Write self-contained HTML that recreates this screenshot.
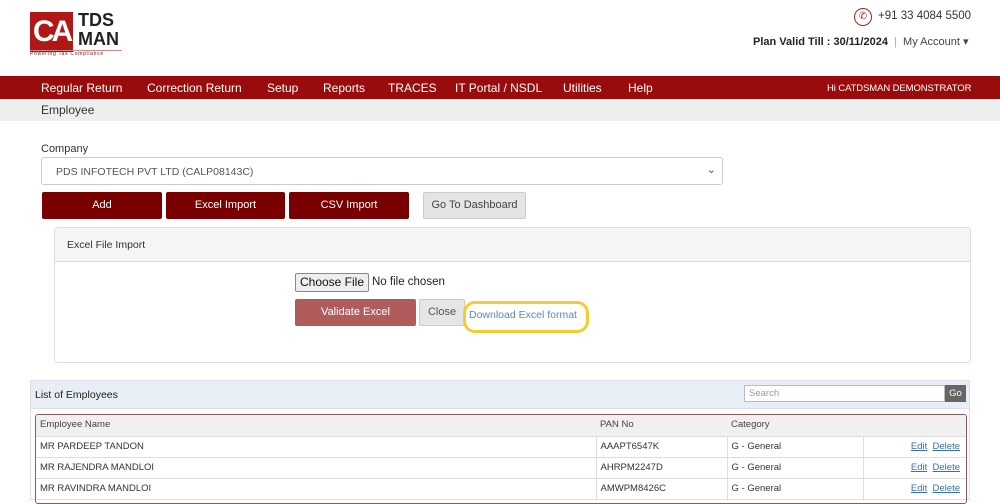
<!DOCTYPE html>
<html><head><meta charset="utf-8"><style>
*{box-sizing:border-box;margin:0;padding:0}
body{width:1000px;height:494px;overflow:hidden;background:#fff;font-family:"Liberation Sans",sans-serif;position:relative;color:#333}
.a{position:absolute}
.nav{left:0;top:76px;width:1000px;height:23px;background:#9a0b0b;color:#fff;font-size:12px}
.nav span{position:absolute;top:5px}
.btn{position:absolute;top:192px;height:27px;background:#780000;color:#fff;font-size:11px;text-align:center;line-height:27px;border-radius:2px}
td{font-size:9.5px;height:21px;line-height:20px;padding:0 0 0 4px;border-top:1px solid #ddd;white-space:nowrap}
a{color:#3a6fa8;text-decoration:underline}
</style></head><body>
<div class="a" style="left:30px;top:12px;width:43px;height:40px;background:#b01818;color:#fff;font-size:30px;font-weight:bold;line-height:40px;text-align:center;letter-spacing:-3px">CA</div>
<div class="a" style="left:78px;top:11px;font-size:18px;font-weight:bold;line-height:19px;color:#222">TDS<br>MAN</div>
<div class="a" style="left:30px;top:50px;width:92px;border-top:1px solid #c88;font-size:5px;color:#900;letter-spacing:.7px;white-space:nowrap">Powering Tax Compliance</div>
<div class="a" style="left:854px;top:8px;width:18px;height:18px;border:1.5px solid #a22;border-radius:50%;color:#a22;font-size:10px;text-align:center;line-height:15px">✆</div>
<div class="a" style="left:878px;top:10px;font-size:11.5px;color:#333">+91 33 4084 5500</div>
<div class="a" style="left:753px;top:35px;font-size:11px;color:#222;white-space:nowrap"><b style="font-weight:600">Plan Valid Till : 30/11/2024</b> <span style="color:#aaa">&nbsp;|&nbsp;</span> <span style="color:#444">My Account ▾</span></div>
<div class="a nav"><span style="left:41px">Regular Return</span><span style="left:147px">Correction Return</span><span style="left:267px">Setup</span><span style="left:323px">Reports</span><span style="left:388px">TRACES</span><span style="left:455px">IT Portal / NSDL</span><span style="left:563px">Utilities</span><span style="left:628px">Help</span><span style="left:827px;font-size:9.5px;top:7px;letter-spacing:-.1px">Hi CATDSMAN DEMONSTRATOR</span></div>
<div class="a" style="left:0;top:99px;width:1000px;height:22px;background:#eceeef;font-size:12px;padding:4px 0 0 41px">Employee</div>
<div class="a" style="left:41px;top:143px;font-size:11px">Company</div>
<div class="a" style="left:41px;top:157px;width:682px;height:28px;border:1px solid #ccc;border-radius:3px;font-size:10.5px;padding:8px 0 0 14px;color:#555">PDS INFOTECH PVT LTD (CALP08143C)<span style="position:absolute;right:6px;top:5px;font-size:11px">⌄</span></div>
<div class="btn" style="left:42px;width:120px">Add</div>
<div class="btn" style="left:166px;width:119px">Excel Import</div>
<div class="btn" style="left:289px;width:120px">CSV Import</div>
<div class="btn" style="left:423px;width:103px;background:#e4e4e4;color:#444;border:1px solid #ccc;line-height:25px">Go To Dashboard</div>
<div class="a" style="left:54px;top:227px;width:917px;height:136px;border:1px solid #ddd;border-radius:3px">
<div style="height:34px;background:#f5f5f5;border-bottom:1px solid #ddd;font-size:10.5px;padding:11px 0 0 12px">Excel File Import</div></div>
<div class="a" style="left:295px;top:273px;width:74px;height:19px;background:#eee;border:1px solid #888;border-radius:2px;font-size:12px;text-align:center;line-height:17px;color:#111">Choose File</div>
<div class="a" style="left:372px;top:276px;font-size:11.5px;color:#222">No file chosen</div>
<div class="a" style="left:295px;top:299px;width:121px;height:27px;background:#b05c5c;border-radius:2px;color:#fff;font-size:11px;text-align:center;line-height:27px">Validate Excel</div>
<div class="a" style="left:419px;top:299px;width:46px;height:27px;background:#e6e6e6;border:1px solid #ccc;border-radius:2px;font-size:11px;text-align:center;line-height:25px;color:#555">Close</div>
<div class="a" style="left:463px;top:301px;width:126px;height:32px;border:3px solid #f2cc30;border-radius:12px"></div>
<div class="a" style="left:469px;top:309px;font-size:10.5px;color:#5a8ab8">Download Excel format</div>
<div class="a" style="left:30px;top:380px;width:940px;height:120px;border:1px solid #dde">
<div style="height:28px;background:#e8eef6;border-bottom:1px solid #dde;font-size:10.5px;padding:8px 0 0 4px;color:#222">List of Employees</div></div>
<div class="a" style="left:744px;top:385px;width:201px;height:17px;border:1px solid #bbb;font-size:9.5px;color:#999;padding:2px 4px;background:#fff">Search</div>
<div class="a" style="left:945px;top:385px;width:21px;height:17px;background:#666;color:#fff;font-size:9.5px;text-align:center;line-height:17px">Go</div>
<div class="a" style="left:35px;top:414px;width:932px;height:90px;border:1px solid #8a5a5a;border-radius:3px;overflow:hidden">
<table style="width:100%;border-collapse:collapse;table-layout:fixed">
<tr style="background:#f0f0f0;color:#444"><td style="width:560px;border:none;height:18px;line-height:18px">Employee Name</td><td style="width:131px;border:none">PAN No</td><td style="width:136px;border:none">Category</td><td style="border:none"></td></tr>
<tr><td>MR PARDEEP TANDON</td><td style="border-left:1px solid #ddd">AAAPT6547K</td><td style="border-left:1px solid #ddd">G - General</td><td style="border-left:1px solid #ddd;text-align:right;padding-right:6px"><a>Edit</a>&nbsp; <a>Delete</a></td></tr>
<tr><td>MR RAJENDRA MANDLOI</td><td style="border-left:1px solid #ddd">AHRPM2247D</td><td style="border-left:1px solid #ddd">G - General</td><td style="border-left:1px solid #ddd;text-align:right;padding-right:6px"><a>Edit</a>&nbsp; <a>Delete</a></td></tr>
<tr><td>MR RAVINDRA MANDLOI</td><td style="border-left:1px solid #ddd">AMWPM8426C</td><td style="border-left:1px solid #ddd">G - General</td><td style="border-left:1px solid #ddd;text-align:right;padding-right:6px"><a>Edit</a>&nbsp; <a>Delete</a></td></tr>
</table></div>
</body></html>
